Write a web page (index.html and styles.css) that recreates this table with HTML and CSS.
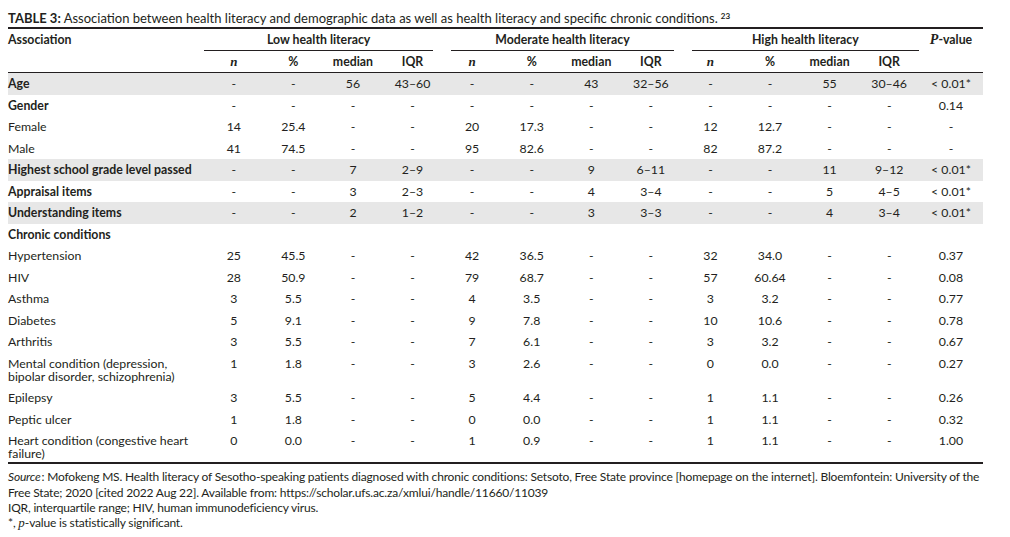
FILE: index.html
```html
<!DOCTYPE html>
<html lang="en">
<head>
<meta charset="utf-8">
<title>Table 3</title>
<link rel="stylesheet" href="styles.css">
</head>
<body>
<div class="wrap">
  <div class="caption"><b>TABLE 3:</b> Association between health literacy and demographic data as well as health literacy and specific chronic conditions.<sup>23</sup></div>
  <table class="tbl">
    <colgroup>
      <col class="c-label">
      <col class="c-num"><col class="c-num"><col class="c-num"><col class="c-num">
      <col class="c-num"><col class="c-num"><col class="c-num"><col class="c-num">
      <col class="c-num"><col class="c-num"><col class="c-num"><col class="c-num">
      <col class="c-p">
    </colgroup>
    <thead>
      <tr class="h1">
        <th class="lbl">Association</th>
        <th colspan="4"><div class="grp grp-low">Low health literacy</div></th>
        <th colspan="4"><div class="grp grp-mod">Moderate health literacy</div></th>
        <th colspan="4"><div class="grp grp-high">High health literacy</div></th>
        <th class="pv"><i class="serif">P</i>-value</th>
      </tr>
      <tr class="h2">
        <th></th>
        <th><i class="serif">n</i></th><th>%</th><th>median</th><th>IQR</th>
        <th><i class="serif">n</i></th><th>%</th><th>median</th><th>IQR</th>
        <th><i class="serif">n</i></th><th>%</th><th>median</th><th>IQR</th>
        <th></th>
      </tr>
    </thead>
    <tbody>
      <tr class="shade bold-label"><td>Age</td><td>-</td><td>-</td><td>56</td><td>43–60</td><td>-</td><td>-</td><td>43</td><td>32–56</td><td>-</td><td>-</td><td>55</td><td>30–46</td><td>&lt; 0.01*</td></tr>
      <tr class="bold-label"><td>Gender</td><td>-</td><td>-</td><td>-</td><td>-</td><td>-</td><td>-</td><td>-</td><td>-</td><td>-</td><td>-</td><td>-</td><td>-</td><td>0.14</td></tr>
      <tr><td>Female</td><td>14</td><td>25.4</td><td>-</td><td>-</td><td>20</td><td>17.3</td><td>-</td><td>-</td><td>12</td><td>12.7</td><td>-</td><td>-</td><td>-</td></tr>
      <tr><td>Male</td><td>41</td><td>74.5</td><td>-</td><td>-</td><td>95</td><td>82.6</td><td>-</td><td>-</td><td>82</td><td>87.2</td><td>-</td><td>-</td><td>-</td></tr>
      <tr class="shade bold-label"><td>Highest school grade level passed</td><td>-</td><td>-</td><td>7</td><td>2–9</td><td>-</td><td>-</td><td>9</td><td>6–11</td><td>-</td><td>-</td><td>11</td><td>9–12</td><td>&lt; 0.01*</td></tr>
      <tr class="bold-label"><td>Appraisal items</td><td>-</td><td>-</td><td>3</td><td>2–3</td><td>-</td><td>-</td><td>4</td><td>3–4</td><td>-</td><td>-</td><td>5</td><td>4–5</td><td>&lt; 0.01*</td></tr>
      <tr class="shade bold-label"><td>Understanding items</td><td>-</td><td>-</td><td>2</td><td>1–2</td><td>-</td><td>-</td><td>3</td><td>3–3</td><td>-</td><td>-</td><td>4</td><td>3–4</td><td>&lt; 0.01*</td></tr>
      <tr class="bold-label"><td>Chronic conditions</td><td></td><td></td><td></td><td></td><td></td><td></td><td></td><td></td><td></td><td></td><td></td><td></td><td></td></tr>
      <tr><td>Hypertension</td><td>25</td><td>45.5</td><td>-</td><td>-</td><td>42</td><td>36.5</td><td>-</td><td>-</td><td>32</td><td>34.0</td><td>-</td><td>-</td><td>0.37</td></tr>
      <tr><td>HIV</td><td>28</td><td>50.9</td><td>-</td><td>-</td><td>79</td><td>68.7</td><td>-</td><td>-</td><td>57</td><td>60.64</td><td>-</td><td>-</td><td>0.08</td></tr>
      <tr><td>Asthma</td><td>3</td><td>5.5</td><td>-</td><td>-</td><td>4</td><td>3.5</td><td>-</td><td>-</td><td>3</td><td>3.2</td><td>-</td><td>-</td><td>0.77</td></tr>
      <tr><td>Diabetes</td><td>5</td><td>9.1</td><td>-</td><td>-</td><td>9</td><td>7.8</td><td>-</td><td>-</td><td>10</td><td>10.6</td><td>-</td><td>-</td><td>0.78</td></tr>
      <tr><td>Arthritis</td><td>3</td><td>5.5</td><td>-</td><td>-</td><td>7</td><td>6.1</td><td>-</td><td>-</td><td>3</td><td>3.2</td><td>-</td><td>-</td><td>0.67</td></tr>
      <tr><td>Mental condition (depression, bipolar disorder, schizophrenia)</td><td>1</td><td>1.8</td><td>-</td><td>-</td><td>3</td><td>2.6</td><td>-</td><td>-</td><td>0</td><td>0.0</td><td>-</td><td>-</td><td>0.27</td></tr>
      <tr><td>Epilepsy</td><td>3</td><td>5.5</td><td>-</td><td>-</td><td>5</td><td>4.4</td><td>-</td><td>-</td><td>1</td><td>1.1</td><td>-</td><td>-</td><td>0.26</td></tr>
      <tr><td>Peptic ulcer</td><td>1</td><td>1.8</td><td>-</td><td>-</td><td>0</td><td>0.0</td><td>-</td><td>-</td><td>1</td><td>1.1</td><td>-</td><td>-</td><td>0.32</td></tr>
      <tr class="last"><td>Heart condition (congestive heart failure)</td><td>0</td><td>0.0</td><td>-</td><td>-</td><td>1</td><td>0.9</td><td>-</td><td>-</td><td>1</td><td>1.1</td><td>-</td><td>-</td><td>1.00</td></tr>
    </tbody>
  </table>
  <div class="notes">
    <p><i class="src">Source</i>: Mofokeng MS. Health literacy of Sesotho-speaking patients diagnosed with chronic conditions: Setsoto, Free State province [homepage on the internet]. Bloemfontein: University of the Free State; 2020 [cited 2022 Aug 22]. Available from: https://scholar.ufs.ac.za/xmlui/handle/11660/11039</p>
    <p>IQR, interquartile range; HIV, human immunodeficiency virus.</p>
    <p class="star">*, <i class="serif">p</i>-value is statistically significant.</p>
  </div>
</div>
</body>
</html>
```
FILE: styles.css
```css
html, body {
  margin: 0;
  padding: 0;
  background: #ffffff;
}

body {
  font-family: Lato, "Open Sans", "Liberation Sans", sans-serif;
  font-size: 12.3px;
  letter-spacing: 0;
  color: #231f20;
}

.wrap {
  width: 975px;
  padding: 10px 0 0 8px;
}

.caption {
  font-size: 13px;
  line-height: 16px;
  letter-spacing: 0;
  padding-bottom: 1px;
  border-bottom: 2px solid #231f20;
}

.caption sup {
  font-size: 8px;
  font-weight: 700;
  vertical-align: 4px;
  line-height: 0;
  margin-left: 3px;
}

.tbl {
  width: 975px;
  table-layout: fixed;
  border-collapse: separate;
  border-spacing: 0;
}

.c-label { width: 196px; }
.c-num { width: 59.58px; }
.c-p { width: 64px; }

.tbl th,
.tbl td {
  padding: 0;
  text-align: center;
  vertical-align: top;
  line-height: 13px;
}

.tbl th {
  font-weight: 700;
}

.tbl .h1 th {
  padding-top: 4px;
}

.tbl .h1 .lbl,
.tbl td:first-child {
  text-align: left;
  padding-right: 11px;
}

.tbl tr.bold-label td:first-child {
  font-weight: 700;
  white-space: nowrap;
}

.tbl .h2 th {
  padding: 4px 0;
  border-bottom: 1px solid #231f20;
}

.grp {
  padding-bottom: 4px;
  border-bottom: 1px solid #231f20;
}

.grp-low { margin: 0 9px 0 0; }
.grp-mod { margin: 0 7px 0 9px; }
.grp-high { margin: 0 0 0 11px; }

.serif {
  font-family: "Liberation Serif", "Times New Roman", serif;
  font-style: italic;
  font-size: 13px;
  letter-spacing: 0;
}

.pv .serif {
  font-size: 14px;
}

.tbl td {
  padding-top: 4.25px;
  padding-bottom: 4.25px;
}

.tbl tr.shade td {
  background: #e7e7e7;
}

.tbl tr.last td {
  padding-bottom: 2px;
}

.notes {
  border-top: 2px solid #231f20;
  padding-top: 5px;
  font-size: 12px;
  letter-spacing: -0.18px;
  line-height: 15.3px;
}

.notes p {
  margin: 0;
}

.notes .src {
  padding-right: 1px;
}
```
